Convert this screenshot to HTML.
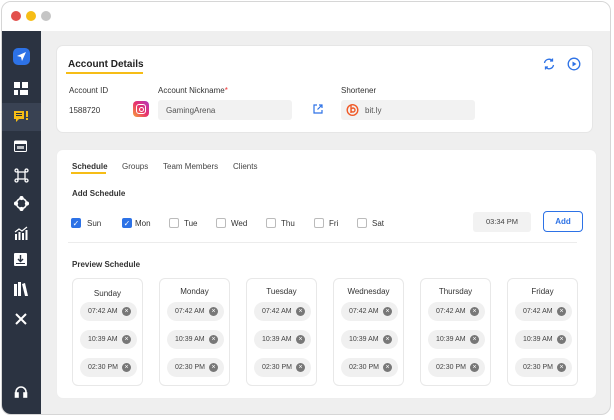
<!DOCTYPE html>
<html><head><meta charset="utf-8"><style>
*{box-sizing:border-box;margin:0;padding:0}
body{width:614px;height:420px;background:#fff;font-family:"Liberation Sans",sans-serif;position:relative;overflow:hidden;color:#222}
.win{position:absolute;left:1px;top:1px;width:610px;height:414px;border:1px solid #d6d6d6;border-radius:10px;overflow:hidden;background:#efefef}
.tb{position:absolute;left:0;top:0;right:0;height:29px;background:#fff}
.dot{position:absolute;top:9px;width:10px;height:10px;border-radius:50%}
.side{position:absolute;left:0;top:29px;width:39px;bottom:0;background:#2b3341}
.ic{position:absolute;left:12px;width:15px;height:15px}
.card{position:absolute;background:#fff;border-radius:7px;border:1px solid #e6e6e6}
.t{position:absolute;white-space:nowrap;font-size:8px;color:#333}
.b{font-weight:bold}
.pill{position:absolute;width:57px;height:19px;border-radius:10px;background:#f0f0f0;font-size:7px;color:#444;padding:6px 0 0 8px}
.pill i{position:absolute;right:6px;top:5px;width:9px;height:9px;border-radius:50%;background:#777;color:#fff;font-style:normal;font-size:7px;line-height:9px;text-align:center}
.day{position:absolute;top:278px;width:71px;height:108px;border:1px solid #e8e8e8;border-radius:6px;background:#fff}
.cb{position:absolute;top:218px;width:10px;height:10px;border:1px solid #bbb;border-radius:2px;background:#fff}
.cb.on{background:#2d72e6;border-color:#2d72e6;color:#fff;font-size:8px;line-height:9px;text-align:center}
</style></head><body>
<div class="win">
<div class="tb"><div class="dot" style="left:9px;background:#e2504c"></div><div class="dot" style="left:24px;background:#f6bd16"></div><div class="dot" style="left:39px;background:#c5c5c5"></div></div>
<div class="side">
 <svg class="ic" style="top:17px;left:11px;width:17px;height:17px" viewBox="0 0 17 17"><rect width="17" height="17" rx="5" fill="#2d72e6"/><path d="M4 8l9-4-4 9-1-4z" fill="#fff"/></svg>
 <svg class="ic" style="top:51px;width:14px;height:13px" viewBox="0 0 14 13"><rect x="0" y="0" width="6" height="6" fill="#fff"/><rect x="8" y="0" width="6" height="6" fill="#fff"/><rect x="0" y="8" width="4" height="5" fill="#fff"/><rect x="6" y="8" width="8" height="5" fill="#fff"/></svg>
 <div style="position:absolute;left:0;top:72px;width:39px;height:28px;background:#394253"></div>
 <svg class="ic" style="top:79px;width:14px;height:14px" viewBox="0 0 14 14"><path d="M0 1h10v8H5l-3 3V9H0z" fill="#f6bd16"/><rect x="12" y="1" width="2" height="6" fill="#f6bd16"/><rect x="12" y="8" width="2" height="2" fill="#f6bd16"/><rect x="2" y="3" width="6" height="1" fill="#2b3341"/><rect x="2" y="5" width="6" height="1" fill="#2b3341"/></svg>
 <svg class="ic" style="top:109px;width:13px;height:12px" viewBox="0 0 13 12"><rect x="0.5" y="1" width="12" height="10.5" rx="1" fill="none" stroke="#fff"/><rect x="0.5" y="1" width="12" height="3" fill="#fff"/><rect x="3" y="6" width="7" height="3" fill="#fff" opacity=".7"/></svg>
 <svg class="ic" style="top:137px" viewBox="0 0 15 15" fill="none" stroke="#fff" stroke-width="1.3"><circle cx="2.5" cy="2.5" r="1.5"/><circle cx="12.5" cy="2.5" r="1.5"/><circle cx="2.5" cy="12.5" r="1.5"/><circle cx="12.5" cy="12.5" r="1.5"/><rect x="4" y="4" width="7" height="7"/></svg>
 <svg class="ic" style="top:165px" viewBox="0 0 15 15" fill="none" stroke="#fff" stroke-width="1.5"><circle cx="7.5" cy="7.5" r="5"/><circle cx="7.5" cy="2" r="1.4" fill="#fff"/><circle cx="7.5" cy="13" r="1.4" fill="#fff"/><circle cx="2" cy="7.5" r="1.4" fill="#fff"/><circle cx="13" cy="7.5" r="1.4" fill="#fff"/></svg>
 <svg class="ic" style="top:194px" viewBox="0 0 15 15" fill="#fff"><rect x="1" y="9" width="2" height="6"/><rect x="4.5" y="7" width="2" height="8"/><rect x="8" y="8" width="2" height="7"/><rect x="11.5" y="5" width="2" height="10"/><path d="M1 7l4-3 3 2 5-4" stroke="#fff" fill="none" stroke-width="1.2"/></svg>
 <svg class="ic" style="top:222px;width:13px;height:13px" viewBox="0 0 13 13"><rect width="13" height="13" rx="1" fill="#fff"/><path d="M6.5 2v6M4 6l2.5 2.5L9 6" stroke="#2b3341" stroke-width="1.4" fill="none"/><rect x="2" y="10" width="9" height="1" fill="#2b3341"/></svg>
 <svg class="ic" style="top:251px;width:14px;height:14px" viewBox="0 0 14 14" fill="#fff"><rect x="0" y="2" width="3" height="12"/><rect x="4" y="0" width="3" height="14"/><path d="M8 2l3-1 3 13-3 0z"/></svg>
 <svg class="ic" style="top:281px;width:14px;height:14px" viewBox="0 0 14 14" stroke="#fff" stroke-width="2" fill="none"><path d="M2 12L12 2M2 2l10 10"/></svg>
 <svg class="ic" style="top:354px;width:14px;height:14px" viewBox="0 0 14 14" fill="none" stroke="#fff" stroke-width="1.6"><path d="M2 9V7a5 5 0 0110 0v2"/><rect x="1.5" y="8" width="2.5" height="4" fill="#fff"/><rect x="10" y="8" width="2.5" height="4" fill="#fff"/></svg>
</div>
</div>
<!-- account card -->
<div class="card" style="left:56px;top:45px;width:537px;height:88px"></div>
<div class="t b" style="left:68px;top:59px;font-size:10px;color:#222">Account Details</div>
<div style="position:absolute;left:66px;top:72px;width:77px;height:2px;background:#f6bd16"></div>
<svg style="position:absolute;left:542px;top:57px" width="14" height="14" viewBox="0 0 14 14" fill="none" stroke="#2d72e6" stroke-width="1.3"><path d="M2.5 6a4.5 4.5 0 018-2M11.5 8a4.5 4.5 0 01-8 2"/><path d="M10.5 1.5v2.5H8M3.5 12.5V10H6"/></svg>
<svg style="position:absolute;left:567px;top:57px" width="14" height="14" viewBox="0 0 14 14"><circle cx="7" cy="7" r="5.8" fill="none" stroke="#2d72e6" stroke-width="1.3"/><path d="M5.5 4.5v5l4-2.5z" fill="#2d72e6"/></svg>
<div class="t" style="left:69px;top:86px">Account ID</div>
<div class="t" style="left:69px;top:106px">1588720</div>
<div style="position:absolute;left:133px;top:101px;width:16px;height:16px;border-radius:4px;background:linear-gradient(45deg,#f7a23b,#e8326b,#b336c0)"><div style="position:absolute;left:3px;top:3px;width:10px;height:10px;border:1.3px solid #fff;border-radius:3px"></div><div style="position:absolute;left:5.5px;top:5.5px;width:5px;height:5px;border:1.2px solid #fff;border-radius:50%"></div></div>
<div class="t" style="left:158px;top:86px">Account Nickname<span style="color:#e33">*</span></div>
<div style="position:absolute;left:158px;top:100px;width:134px;height:20px;background:#f2f2f2;border-radius:3px"></div>
<div class="t" style="left:166px;top:106px;color:#555">GamingArena</div>
<svg style="position:absolute;left:313px;top:104px" width="10" height="10" viewBox="0 0 10 10" fill="none" stroke="#2d72e6" stroke-width="1.2"><path d="M4 1H1v8h8V6M6 1h3v3M9 1L4.5 5.5"/></svg>
<div class="t" style="left:341px;top:86px">Shortener</div>
<div style="position:absolute;left:341px;top:100px;width:134px;height:20px;background:#f2f2f2;border-radius:3px"></div>
<svg style="position:absolute;left:346px;top:103px" width="13" height="13" viewBox="0 0 13 13" fill="none" stroke="#f05a28" stroke-width="1.4"><circle cx="6.5" cy="7" r="5.3"/><path d="M5 2v8M5 7a2 2 0 104 0 2 2 0 00-4 0"/></svg>
<div class="t" style="left:365px;top:106px;color:#555">bit.ly</div>
<!-- schedule card -->
<div class="card" style="left:56px;top:149px;width:541px;height:250px;border-color:#eee"></div>
<div class="t b" style="left:72px;top:162px">Schedule</div>
<div style="position:absolute;left:71px;top:172px;width:35px;height:2px;background:#f6bd16"></div>
<div class="t" style="left:122px;top:162px;color:#444">Groups</div>
<div class="t" style="left:163px;top:162px;color:#444">Team Members</div>
<div class="t" style="left:233px;top:162px;color:#444">Clients</div>
<div class="t b" style="left:72px;top:189px">Add Schedule</div>
<div class="cb on" style="left:71px">✓</div><div class="t" style="left:87px;top:219px">Sun</div>
<div class="cb on" style="left:122px">✓</div><div class="t" style="left:135px;top:219px">Mon</div>
<div class="cb" style="left:169px"></div><div class="t" style="left:184px;top:219px">Tue</div>
<div class="cb" style="left:216px"></div><div class="t" style="left:231px;top:219px">Wed</div>
<div class="cb" style="left:266px"></div><div class="t" style="left:281px;top:219px">Thu</div>
<div class="cb" style="left:314px"></div><div class="t" style="left:329px;top:219px">Fri</div>
<div class="cb" style="left:357px"></div><div class="t" style="left:372px;top:219px">Sat</div>
<div style="position:absolute;left:473px;top:212px;width:58px;height:20px;background:#f2f2f2;border-radius:3px;font-size:7.5px;color:#444;text-align:center;line-height:20px">03:34 PM</div>
<div style="position:absolute;left:543px;top:211px;width:40px;height:21px;border:1.3px solid #2d72e6;border-radius:4px;font-size:8px;font-weight:bold;color:#2d72e6;text-align:center;line-height:19px">Add</div>
<div style="position:absolute;left:68px;top:242px;width:509px;height:1px;background:#ececec"></div>
<div class="t b" style="left:72px;top:260px">Preview Schedule</div>
<div class="day" style="left:72px"><div class="t" style="left:0;width:69px;text-align:center;top:10px">Sunday</div></div>
<div class="day" style="left:159px"><div class="t" style="left:0;width:69px;text-align:center;top:8px">Monday</div></div>
<div class="day" style="left:246px"><div class="t" style="left:0;width:69px;text-align:center;top:8px">Tuesday</div></div>
<div class="day" style="left:333px"><div class="t" style="left:0;width:69px;text-align:center;top:8px">Wednesday</div></div>
<div class="day" style="left:420px"><div class="t" style="left:0;width:69px;text-align:center;top:8px">Thursday</div></div>
<div class="day" style="left:507px"><div class="t" style="left:0;width:69px;text-align:center;top:8px">Friday</div></div>
<div id="pills"></div>
<script>
var h='';[80,167,254,341,428,515].forEach(function(x){[[302,'07:42 AM'],[330,'10:39 AM'],[358,'02:30 PM']].forEach(function(p){h+='<div class="pill" style="left:'+x+'px;top:'+p[0]+'px">'+p[1]+'<i>×</i></div>';});});
document.getElementById('pills').innerHTML=h;
</script>
</body></html>
